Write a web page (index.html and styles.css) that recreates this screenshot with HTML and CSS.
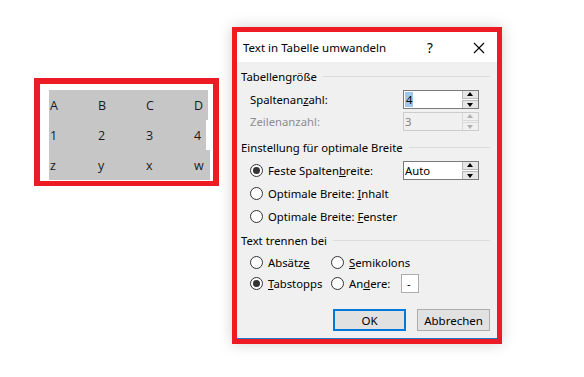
FILE: index.html
```html
<!DOCTYPE html>
<html lang="de">
<head>
    <meta charset="UTF-8">
    <title>Text in Tabelle umwandeln</title>
    <link rel="stylesheet" href="styles.css">
</head>
<body>

    <div class="page">
        <!-- Ausgangstext -->
        <div class="snippet">
            <div class="grid">
                <div class="row r1"><span>A</span><span>B</span><span>C</span><span>D</span></div>
                <div class="row r2"><span>1</span><span>2</span><span>3</span><span>4</span></div>
                <div class="row r3"><span>z</span><span>y</span><span>x</span><span>w</span></div>
            </div>
        </div>

        <!-- Dialog -->
        <div class="dialog">
            <div class="titlebar">
                <span class="title">Text in Tabelle umwandeln</span>
                <span class="help">?</span>
                <span class="close">
                    <svg width="12" height="12" viewBox="0 0 12 12"><path d="M1 1 L11 11 M11 1 L1 11" stroke="#000" stroke-width="1.1" fill="none"/></svg>
                </span>
            </div>

            <div class="body">
                <div class="group-head"><span>Tabellengröße</span><i></i></div>
                <div class="field first">
                    <span class="label">Spaltenan<u>z</u>ahl:</span>
                    <div class="spin">
                        <span class="value"><b class="sel">4</b></span>
                        <span class="arrows"><em class="up"></em><em class="down"></em></span>
                    </div>
                </div>
                <div class="field disabled">
                    <span class="label">Zeilenanzahl:</span>
                    <div class="spin">
                        <span class="value">3</span>
                        <span class="arrows"><em class="up"></em><em class="down"></em></span>
                    </div>
                </div>

                <div class="group-head second"><span>Einstellung für optimale Breite</span><i></i></div>
                <div class="option first">
                    <span class="radio checked"></span>
                    <span class="label wide">Feste Spalten<u>b</u>reite:</span>
                    <div class="spin">
                        <span class="value">Auto</span>
                        <span class="arrows"><em class="up"></em><em class="down"></em></span>
                    </div>
                </div>
                <div class="option">
                    <span class="radio"></span>
                    <span class="label">Optimale Breite: <u>I</u>nhalt</span>
                </div>
                <div class="option">
                    <span class="radio"></span>
                    <span class="label">Optimale Breite: <u>F</u>enster</span>
                </div>

                <div class="group-head third"><span>Text trennen bei</span><i></i></div>
                <div class="option split first">
                    <div class="col">
                        <span class="radio"></span>
                        <span class="label">Absätz<u>e</u></span>
                    </div>
                    <div class="col">
                        <span class="radio"></span>
                        <span class="label"><u>S</u>emikolons</span>
                    </div>
                </div>
                <div class="option split tight">
                    <div class="col">
                        <span class="radio checked"></span>
                        <span class="label"><u>T</u>abstopps</span>
                    </div>
                    <div class="col">
                        <span class="radio"></span>
                        <span class="label short">An<u>d</u>ere:</span>
                        <span class="other">-</span>
                    </div>
                </div>

                <div class="buttons">
                    <button class="default">OK</button>
                    <button>Abbrechen</button>
                </div>
            </div>
        </div>
    </div>

</body>
</html>
```

FILE: styles.css
```css
/* Seite */
body {
    margin: 0;
    background-color: #fff;
    font-family: "Noto Sans", "Open Sans", sans-serif;
    font-size: 11.3px;
    color: #000;
}

.page {
    display: flex;
    align-items: flex-start;
    padding-left: 34px;
    gap: 13px;
    height: 377px;
    box-sizing: border-box;
}

/* Ausgangstext links */
.snippet {
    margin-top: 78px;
    width: 185px;
    height: 108px;
    box-sizing: border-box;
    border: 6px solid #ed1c24;
    border-bottom-width: 5px;
    background-color: #fff;
    padding: 6px 0 0 9px;
}

.grid {
    font-family: "Open Sans", sans-serif;
    font-size: 12.5px;
    color: #1a1a1a;
}

.row {
    display: flex;
    height: 30px;
    align-items: center;
    background-color: #c6c6c6;
}

.row span {
    width: 47px;
    padding-left: 1px;
}

.row span:last-child {
    width: auto;
}

.r1 { width: 159px; }
.r2 { width: 157px; }
.r3 { width: 161px; }

/* Dialog */
.dialog {
    margin-top: 27px;
    width: 270px;
    height: 317px;
    box-sizing: border-box;
    border: 5px solid #ed1c24;
    background-color: #f0f0f0;
    box-shadow: 0 0 14px rgba(0, 0, 0, 0.18);
    display: flex;
    flex-direction: column;
}

.titlebar {
    height: 30px;
    background-color: #fff;
    display: flex;
    align-items: center;
    padding-left: 6px;
    padding-top: 1px;
    box-sizing: border-box;
}

.title {
    flex: 1;
    font-size: 11.5px;
}

.help {
    width: 46px;
    font-size: 13.5px;
}

.close {
    width: 24px;
    display: flex;
    align-items: center;
}

.body {
    flex: 1;
    padding: 4px 7px 0 4px;
    border-bottom: 1px solid #1979ca;
}

.group-head {
    display: flex;
    align-items: center;
    height: 20px;
}

.group-head i {
    flex: 1;
    height: 1px;
    background-color: #dcdcdc;
    margin-left: 6px;
}

.group-head.second { margin-top: 6px; }
.group-head.third { margin-top: 4px; }

.field,
.option {
    display: flex;
    align-items: center;
    height: 20px;
    margin-top: 2px;
    padding-left: 9px;
}

.field.first { margin-top: 3px; }
.option { margin-top: 3px; }
.option.first { margin-top: 3px; }
.option.split.first { margin-top: 2px; }
.option.tight { margin-top: 1px; }

.field .label {
    width: 153px;
}

.disabled .label {
    color: #8d8d8d;
}

u {
    text-decoration: underline;
    text-underline-offset: 1px;
}

/* Drehfeld */
.spin {
    display: flex;
    width: 76px;
    height: 19px;
    box-sizing: border-box;
    border: 1px solid #7a7a7a;
    background-color: #fff;
}

.spin .value {
    flex: 1;
    padding-left: 1px;
    line-height: 17px;
}

.sel {
    font-weight: normal;
    background-color: #9dc8ee;
    padding: 0 1px;
}

.spin .arrows {
    width: 16px;
    display: flex;
    flex-direction: column;
    gap: 1px;
}

.arrows em {
    flex: 1;
    background-color: #e6e6e6;
    border: 1px solid #b8b8b8;
    border-right: none;
    position: relative;
}

.arrows .up { border-top: none; }
.arrows .down { border-bottom: none; }

.arrows em::after {
    content: "";
    position: absolute;
    left: 4px;
    top: 2px;
    border-left: 3px solid transparent;
    border-right: 3px solid transparent;
}

.arrows .up::after { border-bottom: 4px solid #000; top: 1px; }
.arrows .down::after { border-top: 4px solid #000; top: 2px; }

.disabled .spin {
    border-color: #cccccc;
    background-color: #f0f0f0;
    color: #838383;
}

.disabled .arrows em {
    background-color: #f0f0f0;
    border-color: #d9d9d9;
}

.disabled .arrows em::after {
    border-bottom-color: #b0b0b0;
    border-top-color: #b0b0b0;
}

/* Optionsfelder */
.radio {
    width: 13px;
    height: 13px;
    box-sizing: border-box;
    border: 1px solid #333;
    border-radius: 50%;
    background-color: #fff;
    margin-right: 5px;
    display: flex;
    align-items: center;
    justify-content: center;
}

.radio.checked::after {
    content: "";
    width: 7px;
    height: 7px;
    border-radius: 50%;
    background-color: #333;
}

.option .label.wide {
    width: 135px;
}

.col {
    display: flex;
    align-items: center;
    width: 81px;
}

.col + .col {
    width: auto;
}

.label.short {
    width: 52px;
}

.other {
    width: 18px;
    height: 19px;
    box-sizing: border-box;
    border: 1px solid #adadad;
    background-color: #fff;
    padding-left: 5px;
    line-height: 17px;
}

/* Schaltflächen */
.buttons {
    display: flex;
    justify-content: flex-end;
    gap: 11px;
    margin-top: 16px;
}

button {
    width: 73px;
    height: 22px;
    font-family: inherit;
    font-size: 11.5px;
    background-color: #e1e1e1;
    border: 1px solid #adadad;
    padding: 0;
}

button.default {
    border: 2px solid #0078d7;
}
```
